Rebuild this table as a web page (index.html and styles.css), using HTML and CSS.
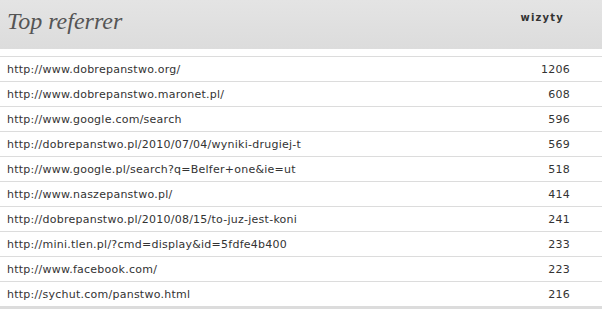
FILE: index.html
```html
<!DOCTYPE html>
<html>
<head>
<meta charset="utf-8">
<link rel="stylesheet" href="styles.css">
</head>
<body>
<div class="panel">
  <div class="head">
    <h1 class="title">Top referrer</h1>
    <div class="colhead">wizyty</div>
  </div>
  <div class="gap"></div>
  <ul class="rows">
    <li class="row"><span class="url">http://www.dobrepanstwo.org/</span><span class="num">1206</span></li>
    <li class="row"><span class="url">http://www.dobrepanstwo.maronet.pl/</span><span class="num">608</span></li>
    <li class="row"><span class="url">http://www.google.com/search</span><span class="num">596</span></li>
    <li class="row"><span class="url">http://dobrepanstwo.pl/2010/07/04/wyniki-drugiej-t</span><span class="num">569</span></li>
    <li class="row"><span class="url">http://www.google.pl/search?q=Belfer+one&amp;ie=ut</span><span class="num">518</span></li>
    <li class="row"><span class="url">http://www.naszepanstwo.pl/</span><span class="num">414</span></li>
    <li class="row"><span class="url">http://dobrepanstwo.pl/2010/08/15/to-juz-jest-koni</span><span class="num">241</span></li>
    <li class="row"><span class="url">http://mini.tlen.pl/?cmd=display&amp;id=5fdfe4b400</span><span class="num">233</span></li>
    <li class="row"><span class="url">http://www.facebook.com/</span><span class="num">223</span></li>
    <li class="row last"><span class="url">http://sychut.com/panstwo.html</span><span class="num">216</span></li>
  </ul>
</div>
</body>
</html>
```

FILE: styles.css
```css
html, body {
  margin: 0;
  padding: 0;
  background: #fff;
}
.panel {
  width: 602px;
  font-family: "DejaVu Sans", Verdana, sans-serif;
  color: #333;
}
.head {
  height: 49px;
  background: linear-gradient(#e4e4e4, #dcdcdc);
  display: flex;
  justify-content: space-between;
  align-items: flex-start;
}
.title {
  margin: 0;
  padding: 7px 0 0 7px;
  font-family: "Liberation Serif", "DejaVu Serif", serif;
  font-style: italic;
  font-weight: normal;
  font-size: 24px;
  line-height: 28px;
  color: #555;
}
.colhead {
  padding: 11px 38px 0 0;
  font-size: 10px;
  font-weight: bold;
  letter-spacing: 1.2px;
  line-height: 14px;
  color: #333;
}
.gap {
  height: 7px;
  border-bottom: 1px solid #dcdcdc;
}
.rows {
  list-style: none;
  margin: 0;
  padding: 0;
}
.row {
  height: 24px;
  border-bottom: 1px solid #dcdcdc;
  display: flex;
  align-items: center;
  justify-content: space-between;
  font-size: 11px;
  letter-spacing: 0.25px;
}
.row.last {
  border-bottom: 3px solid #dcdcdc;
}
.url {
  padding-left: 7px;
}
.num {
  padding-right: 32px;
}
```
